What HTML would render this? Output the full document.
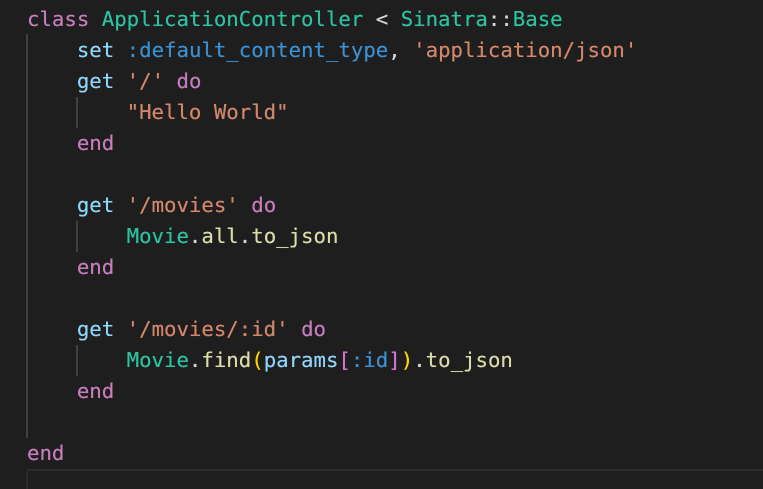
<!DOCTYPE html>
<html><head><meta charset="utf-8"><style>
body{margin:0;width:763px;height:482px;background:#1e1e1e;overflow:hidden;position:relative;font-family:"DejaVu Sans Mono","Liberation Mono",monospace;font-size:20.7px;}
.l{position:absolute;left:27px;height:31px;line-height:31px;white-space:pre;color:#d4d4d4;text-shadow:0 0 0.4px currentColor}
.g{position:absolute;width:2px;background:#404040}
.k{color:#c77dbb}.c{color:#2bc3a0}.v{color:#8fd6fb}.s{color:#3a90d2}.str{color:#d2876a}.f{color:#dcdcaa}.y{color:#ffd700}.p{color:#da70d6}
</style></head><body>
<div class="g" style="left:26px;top:34px;height:404px"></div>
<div class="g" style="left:76px;top:97px;height:31px"></div>
<div class="g" style="left:76px;top:221px;height:31px"></div>
<div class="g" style="left:76px;top:345px;height:31px"></div>
<div style="position:absolute;left:26px;top:469px;width:760px;height:20px;border-top:2px solid #2a2a2a;border-left:2px solid #2a2a2a;box-sizing:border-box"></div>
<div class="l" style="top:4px"><span class="k">class</span> <span class="c">ApplicationController</span> &lt; <span class="c">Sinatra</span>::<span class="c">Base</span></div>
<div class="l" style="top:35px">    <span class="v">set</span> <span class="s">:default_content_type</span>, <span class="str">'application/json'</span></div>
<div class="l" style="top:66px">    <span class="v">get</span> <span class="str">'/'</span> <span class="k">do</span></div>
<div class="l" style="top:97px">        <span class="str">"Hello World"</span></div>
<div class="l" style="top:128px">    <span class="k">end</span></div>
<div class="l" style="top:190px">    <span class="v">get</span> <span class="str">'/movies'</span> <span class="k">do</span></div>
<div class="l" style="top:221px">        <span class="c">Movie</span>.<span class="f">all</span>.<span class="f">to_json</span></div>
<div class="l" style="top:252px">    <span class="k">end</span></div>
<div class="l" style="top:314px">    <span class="v">get</span> <span class="str">'/movies/:id'</span> <span class="k">do</span></div>
<div class="l" style="top:345px">        <span class="c">Movie</span>.<span class="f">find</span><span class="y">(</span><span class="v">params</span><span class="p">[</span><span class="s">:id</span><span class="p">]</span><span class="y">)</span>.<span class="f">to_json</span></div>
<div class="l" style="top:376px">    <span class="k">end</span></div>
<div class="l" style="top:438px"><span class="k">end</span></div>
</body></html>
